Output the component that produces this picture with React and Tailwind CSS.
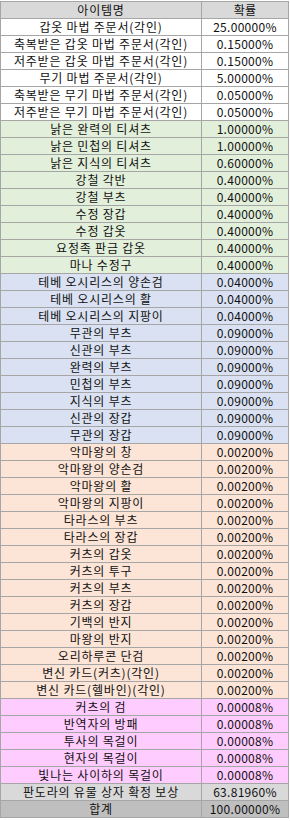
const GREEN = "bg-[#e2efda]";
const BLUE = "bg-[#d9e1f2]";
const ORANGE = "bg-[#fce4d6]";
const PINK = "bg-[#ffccff]";

// [name, rate, bg]
const rows = [
  ["갑옷 마법 주문서(각인)", "25.00000%", "bg-white"],
  ["축복받은 갑옷 마법 주문서(각인)", "0.15000%", "bg-white"],
  ["저주받은 갑옷 마법 주문서(각인)", "0.15000%", "bg-white"],
  ["무기 마법 주문서(각인)", "5.00000%", "bg-white"],
  ["축복받은 무기 마법 주문서(각인)", "0.05000%", "bg-white"],
  ["저주받은 무기 마법 주문서(각인)", "0.05000%", "bg-white"],
  ["낡은 완력의 티셔츠", "1.00000%", GREEN],
  ["낡은 민첩의 티셔츠", "1.00000%", GREEN],
  ["낡은 지식의 티셔츠", "0.60000%", GREEN],
  ["강철 각반", "0.40000%", GREEN],
  ["강철 부츠", "0.40000%", GREEN],
  ["수정 장갑", "0.40000%", GREEN],
  ["수정 갑옷", "0.40000%", GREEN],
  ["요정족 판금 갑옷", "0.40000%", GREEN],
  ["마나 수정구", "0.40000%", GREEN],
  ["테베 오시리스의 양손검", "0.04000%", BLUE],
  ["테베 오시리스의 활", "0.04000%", BLUE],
  ["테베 오시리스의 지팡이", "0.04000%", BLUE],
  ["무관의 부츠", "0.09000%", BLUE],
  ["신관의 부츠", "0.09000%", BLUE],
  ["완력의 부츠", "0.09000%", BLUE],
  ["민첩의 부츠", "0.09000%", BLUE],
  ["지식의 부츠", "0.09000%", BLUE],
  ["신관의 장갑", "0.09000%", BLUE],
  ["무관의 장갑", "0.09000%", BLUE],
  ["악마왕의 창", "0.00200%", ORANGE],
  ["악마왕의 양손검", "0.00200%", ORANGE],
  ["악마왕의 활", "0.00200%", ORANGE],
  ["악마왕의 지팡이", "0.00200%", ORANGE],
  ["타라스의 부츠", "0.00200%", ORANGE],
  ["타라스의 장갑", "0.00200%", ORANGE],
  ["커츠의 갑옷", "0.00200%", ORANGE],
  ["커츠의 투구", "0.00200%", ORANGE],
  ["커츠의 부츠", "0.00200%", ORANGE],
  ["커츠의 장갑", "0.00200%", ORANGE],
  ["기백의 반지", "0.00200%", ORANGE],
  ["마왕의 반지", "0.00200%", ORANGE],
  ["오리하루콘 단검", "0.00200%", ORANGE],
  ["변신 카드(커츠)(각인)", "0.00200%", ORANGE],
  ["변신 카드(헬바인)(각인)", "0.00200%", ORANGE],
  ["커츠의 검", "0.00008%", PINK],
  ["반역자의 방패", "0.00008%", PINK],
  ["투사의 목걸이", "0.00008%", PINK],
  ["현자의 목걸이", "0.00008%", PINK],
  ["빛나는 사이하의 목걸이", "0.00008%", PINK],
  ["판도라의 유물 상자 확정 보상", "63.81960%", "bg-[#d9d9d9]"],
  ["합계", "100.00000%", "bg-[#bfbfbf]"],
];

function Row({ name, rate, bg }) {
  return (
    <div className={`grid grid-cols-[201px_87px] h-[17px] ${bg}`}>
      <div className="border-r border-b border-[#a6a6a6] flex items-center justify-center whitespace-nowrap text-[12px] leading-[16px] tracking-[0.8px]">
        {name}
      </div>
      <div className="border-r border-b border-[#a6a6a6] flex items-center justify-center whitespace-nowrap text-[12px] leading-[16px] tracking-[0.3px]">
        {rate}
      </div>
    </div>
  );
}

export default function App() {
  return (
    <div className="w-[290px] bg-white pt-px">
      <div
        className="w-[289px] border-l border-t border-[#a6a6a6] text-[#111]"
        style={{ fontFamily: '"Noto Sans CJK KR", "Noto Sans", sans-serif' }}
      >
        <Row name="아이템명" rate="확률" bg="bg-[#d9d9d9]" />
        {rows.map(([name, rate, bg]) => (
          <Row key={name} name={name} rate={rate} bg={bg} />
        ))}
      </div>
    </div>
  );
}
